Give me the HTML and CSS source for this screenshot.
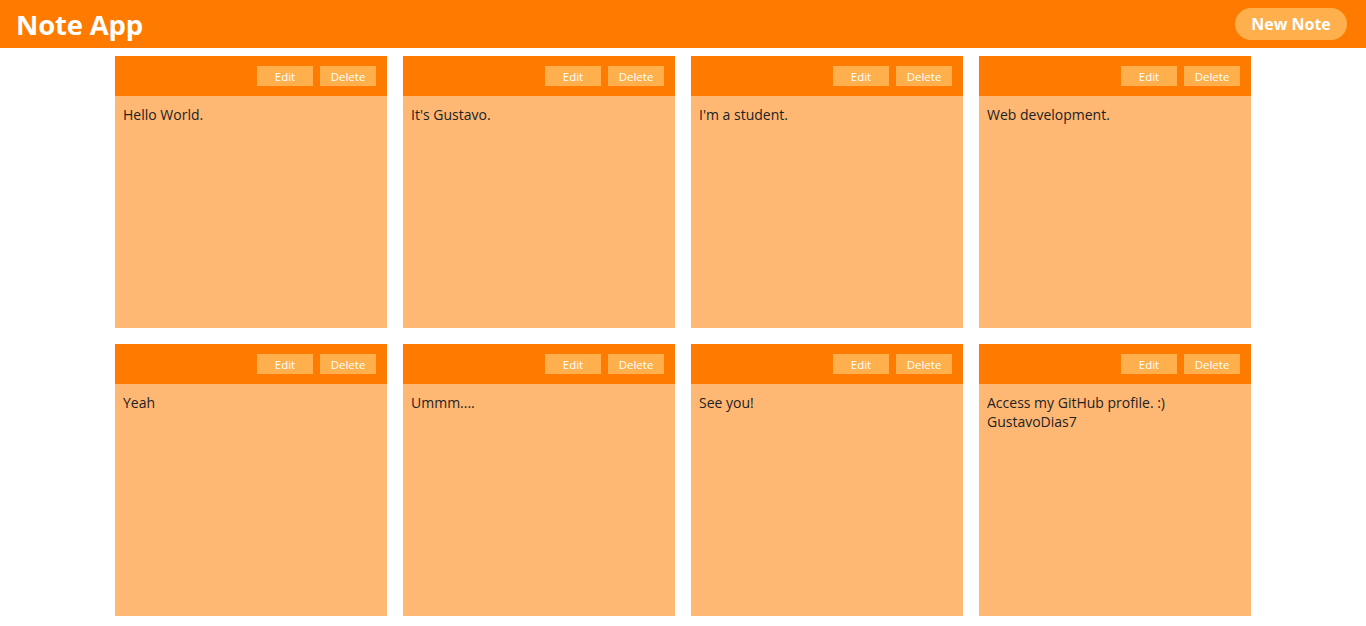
FILE: index.html
```html
<!DOCTYPE html>
<html lang="en">
<head>
<meta charset="utf-8">
<title>Note App</title>
<link rel="stylesheet" href="styles.css">
</head>
<body>
<header class="topbar">
  <h1 class="title">Note App</h1>
  <button class="new-note">New Note</button>
</header>
<main class="notes">
  <div class="note"><div class="note-head"><button class="btn">Edit</button><button class="btn">Delete</button></div><div class="note-body">Hello World.</div></div>
  <div class="note"><div class="note-head"><button class="btn">Edit</button><button class="btn">Delete</button></div><div class="note-body">It's Gustavo.</div></div>
  <div class="note"><div class="note-head"><button class="btn">Edit</button><button class="btn">Delete</button></div><div class="note-body">I'm a student.</div></div>
  <div class="note"><div class="note-head"><button class="btn">Edit</button><button class="btn">Delete</button></div><div class="note-body">Web development.</div></div>
  <div class="note"><div class="note-head"><button class="btn">Edit</button><button class="btn">Delete</button></div><div class="note-body">Yeah</div></div>
  <div class="note"><div class="note-head"><button class="btn">Edit</button><button class="btn">Delete</button></div><div class="note-body">Ummm....</div></div>
  <div class="note"><div class="note-head"><button class="btn">Edit</button><button class="btn">Delete</button></div><div class="note-body">See you!</div></div>
  <div class="note"><div class="note-head"><button class="btn">Edit</button><button class="btn">Delete</button></div><div class="note-body">Access my GitHub profile. :)<br>GustavoDias7</div></div>
</main>
</body>
</html>
```
FILE: styles.css
```css
* { box-sizing: border-box; }
body {
  margin: 0;
  font-family: "Open Sans", "Noto Sans", sans-serif;
  background: #ffffff;
}
.topbar {
  height: 48px;
  background: #ff7b00;
  display: flex;
  align-items: center;
  justify-content: space-between;
  padding: 0 19px 0 16px;
}
.title {
  margin: 0;
  color: #ffffff;
  font-size: 27.5px;
  font-weight: 700;
  letter-spacing: -0.2px;
}
.new-note {
  background: #ffb04c;
  color: #ffffff;
  border: none;
  border-radius: 16px;
  width: 112px;
  height: 32px;
  font-family: inherit;
  font-size: 16px;
  font-weight: 700;
  padding: 0;
}
.notes {
  display: grid;
  grid-template-columns: repeat(4, 272px);
  gap: 16px;
  justify-content: center;
  margin-top: 8px;
}
.note {
  height: 272px;
  background: #ffb874;
  display: flex;
  flex-direction: column;
}
.note-head {
  height: 40px;
  background: #ff7b00;
  display: flex;
  justify-content: flex-end;
  align-items: flex-start;
  gap: 7px;
  padding: 10px 11px 0 0;
}
.btn {
  width: 56px;
  height: 20px;
  background: #ffb04c;
  color: #ffffff;
  border: none;
  padding: 0;
  font-family: inherit;
  font-size: 11.5px;
}
.note-body {
  padding: 9px 8px;
  font-size: 14px;
  line-height: 19px;
  color: #222222;
}
```
